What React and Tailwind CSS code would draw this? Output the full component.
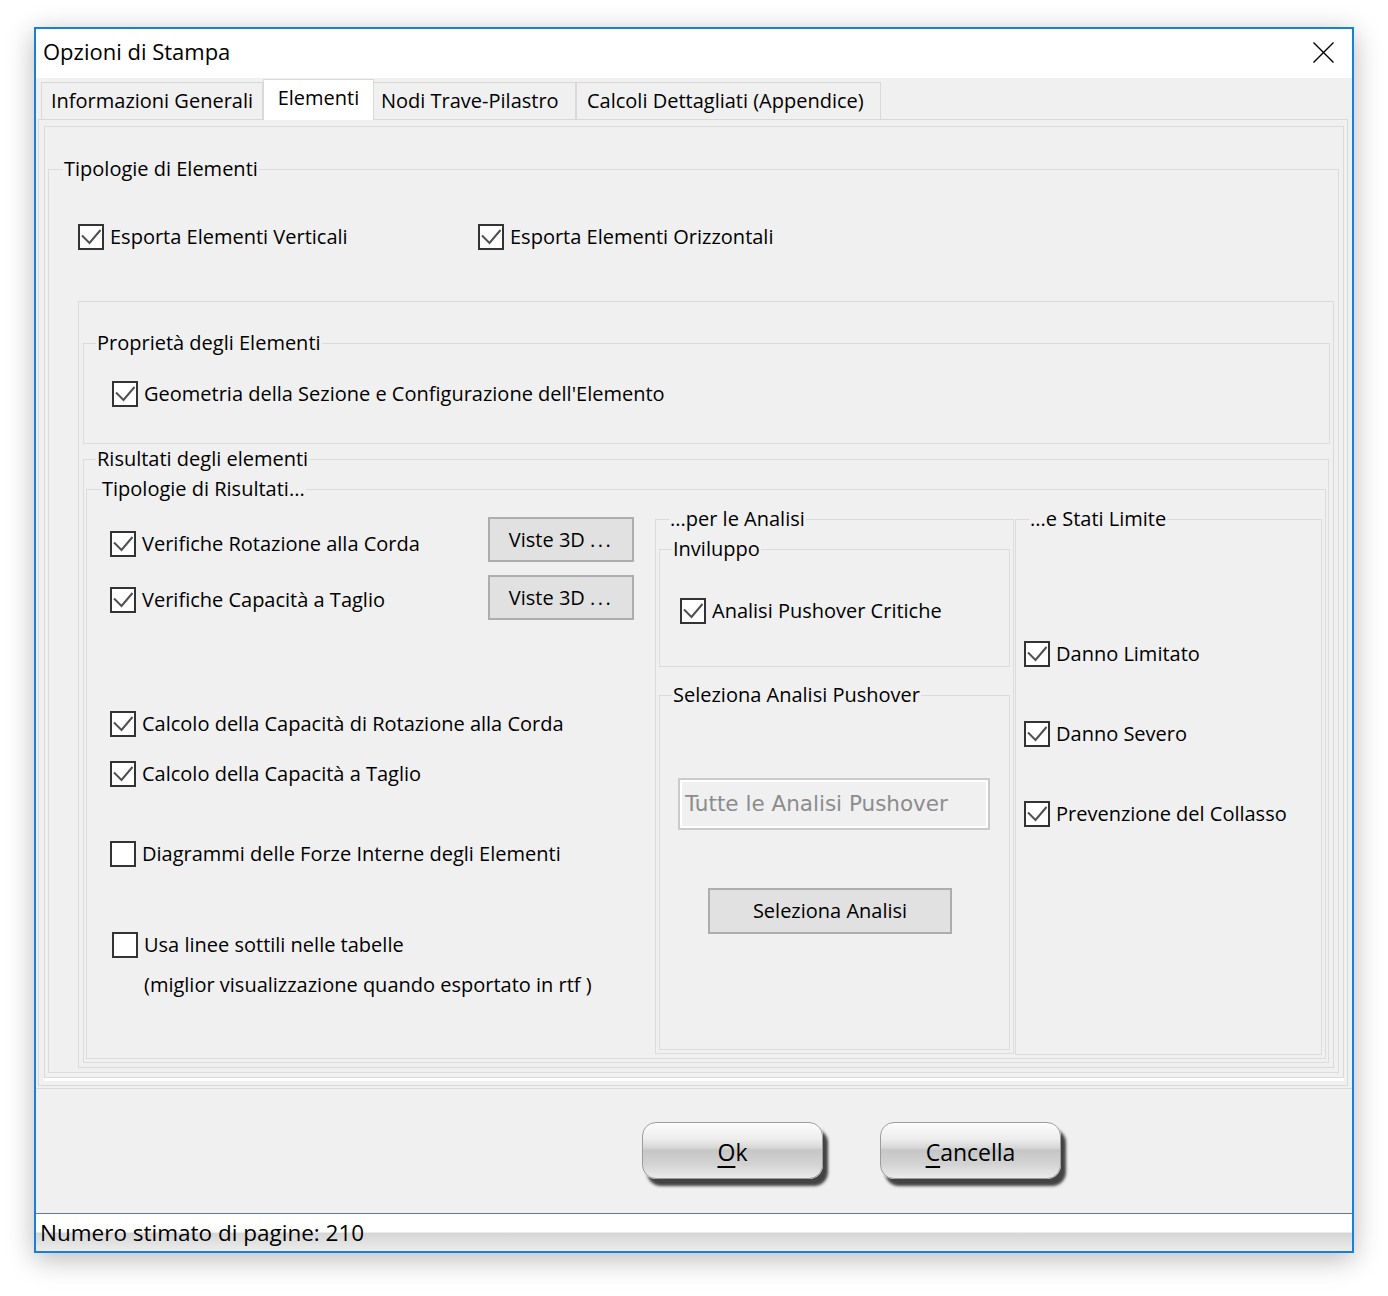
function Box({ checked }) {
  return (
    <span className="w-[26px] h-[26px] border-2 border-[#333] bg-white flex items-center justify-center shrink-0">
      {checked && (
        <svg width="22" height="22" viewBox="0 0 22 22">
          <path d="M2 9.5 L9.5 17 L20.5 4" fill="none" stroke="#505050" strokeWidth="2" />
        </svg>
      )}
    </span>
  )
}

function CheckRow({ checked, label, className = '' }) {
  return (
    <div className={'flex items-center h-[26px] ' + className}>
      <Box checked={checked} />
      <span className="ml-[6px] leading-[24px] whitespace-nowrap">{label}</span>
    </div>
  )
}

function Group({ title, className = '', lg = '', children }) {
  return (
    <fieldset className={'min-w-0 border border-[#dcdcdc] ' + className}>
      <legend className={'px-[1px] leading-[24px] whitespace-nowrap ' + lg}>{title}</legend>
      {children}
    </fieldset>
  )
}

function WinButton({ children, className = '' }) {
  return (
    <button className={'border-2 border-[#adadad] bg-[#e1e1e1] leading-[24px] flex items-center justify-center ' + className}>
      {children}
    </button>
  )
}

function GlossButton({ first, rest }) {
  return (
    <button className="w-[181px] h-[57px] rounded-[14px] border border-[#9c9c9c] bg-[linear-gradient(180deg,#fcfcfc_0%,#ececec_30%,#d9d9d9_44%,#c6c6c6_50%,#d3d3d3_75%,#ebebeb_100%)] shadow-[5px_7px_3px_rgba(0,0,0,0.72),inset_0_1px_0_#fff] text-[23px] leading-[30px] pt-[2px]">
      <span className="underline decoration-2 underline-offset-[5px]">{first}</span>
      {rest}
    </button>
  )
}

export default function App() {
  return (
    <div className="min-h-[1296px] bg-white pt-[27px] pl-[34px] font-['Open_Sans',sans-serif] text-[20px] text-black">
      <div className="w-[1320px] h-[1226px] border-2 border-[#1a7fd6] bg-[#f0f0f0] flex flex-col shadow-[0_6px_26px_rgba(0,0,0,0.28)]">
        {/* title bar */}
        <div className="h-[49px] bg-white flex justify-between shrink-0">
          <div className="pl-[7px] pt-[7px] text-[22px] leading-[30px]">Opzioni di Stampa</div>
          <svg className="mt-[13px] mr-[18px]" width="21" height="21" viewBox="0 0 21 21">
            <path d="M0.5 0.5 L20.5 20.5 M20.5 0.5 L0.5 20.5" stroke="#000" strokeWidth="1.4" />
          </svg>
        </div>

        {/* tabs */}
        <div className="h-[41px] flex items-end pl-[5px] shrink-0">
          <div className="w-[222px] h-[37px] border border-b-0 border-[#d9d9d9] text-center pt-[6px] leading-[24px]">Informazioni Generali</div>
          <div className="relative z-10 -mb-[1px] w-[111px] h-[41px] bg-white border border-b-0 border-[#d9d9d9] text-center pt-[6px] leading-[24px]">Elementi</div>
          <div className="w-[202px] h-[37px] border border-b-0 border-l-0 border-[#d9d9d9] pl-[7px] pt-[6px] leading-[24px] whitespace-nowrap">Nodi Trave-Pilastro</div>
          <div className="w-[305px] h-[37px] border border-b-0 border-[#d9d9d9] pl-[10px] pt-[6px] leading-[24px] whitespace-nowrap">Calcoli Dettagliati (Appendice)</div>
        </div>

        {/* tab page */}
        <div className="ml-[2px] w-[1310px] h-[967px] shrink-0 border border-[#d9d9d9] pt-[6px] pl-[5px]">
          <div className="w-[1300px] h-[952px] border border-[#dadada] pl-[3px] shadow-[0_3px_0_#ffffff]">
            <Group title="Tipologie di Elementi" className="mt-[30px] w-[1291px] h-[916px]" lg="ml-[14px]">
              <div className="mt-[43px] ml-[29px] flex">
                <CheckRow checked label="Esporta Elementi Verticali" className="w-[400px]" />
                <CheckRow checked label="Esporta Elementi Orizzontali" />
              </div>

              <div className="mt-[51px] ml-[29px] w-[1256px] h-[767px] border border-[#dadada] pl-[4px]">
                <Group title="Proprietà degli Elementi" className="mt-[29px] w-[1247px] h-[113px]" lg="ml-[12px]">
                  <CheckRow checked label="Geometria della Sezione e Configurazione dell'Elemento" className="mt-[26px] ml-[28px]" />
                </Group>

                <Group title="Risultati degli elementi" className="mt-[3px] w-[1246px] h-[616px]" lg="ml-[12px]">
                  <Group title="Tipologie di Risultati..." className="mt-[6px] ml-[2px] w-[1240px] h-[582px]" lg="ml-[14px]">
                    <div className="flex">
                      {/* left column */}
                      <div className="w-[568px] flex flex-col">
                        <div className="mt-[16px] pl-[23px] flex items-start">
                          <CheckRow checked label="Verifiche Rotazione alla Corda" className="w-[378px] mt-[14px]" />
                          <WinButton className="w-[146px] h-[45px]">
                            Viste 3D <span className="ml-[5px] tracking-[2.5px]">...</span>
                          </WinButton>
                        </div>
                        <div className="mt-[13px] pl-[23px] flex items-start">
                          <CheckRow checked label="Verifiche Capacità a Taglio" className="w-[378px] mt-[12px]" />
                          <WinButton className="w-[146px] h-[45px]">
                            Viste 3D <span className="ml-[5px] tracking-[2.5px]">...</span>
                          </WinButton>
                        </div>
                        <CheckRow checked label="Calcolo della Capacità di Rotazione alla Corda" className="mt-[91px] ml-[23px]" />
                        <CheckRow checked label="Calcolo della Capacità a Taglio" className="mt-[24px] ml-[23px]" />
                        <CheckRow label="Diagrammi delle Forze Interne degli Elementi" className="mt-[54px] ml-[23px]" />
                        <CheckRow label="Usa linee sottili nelle tabelle" className="mt-[65px] ml-[25px]" />
                        <div className="mt-[15px] ml-[57px] leading-[24px]">(miglior visualizzazione quando esportato in rtf )</div>
                      </div>

                      {/* middle column */}
                      <Group title="...per le Analisi" className="mt-[6px] w-[359px] h-[547px]" lg="ml-[13px]">
                        <Group title="Inviluppo" className="mt-[6px] ml-[3px] w-[351px] h-[130px]" lg="ml-[12px]">
                          <CheckRow checked label="Analisi Pushover Critiche" className="mt-[37px] ml-[20px]" />
                        </Group>
                        <Group title="Seleziona Analisi Pushover" className="mt-[16px] ml-[3px] w-[351px] h-[367px]" lg="ml-[12px]">
                          <div className="mt-[71px] ml-[18px] w-[312px] h-[52px] border-2 border-[#cacaca] shadow-[inset_0_0_0_2px_#ffffff] pl-[5px] flex items-center font-['DejaVu_Sans',sans-serif] text-[21.5px] text-[#8c8c8c] whitespace-nowrap">
                            Tutte le Analisi Pushover
                          </div>
                          <WinButton className="mt-[58px] ml-[48px] w-[244px] h-[46px]">Seleziona Analisi</WinButton>
                        </Group>
                      </Group>

                      {/* right column */}
                      <Group title="...e Stati Limite" className="mt-[6px] ml-[1px] w-[307px] h-[548px]" lg="ml-[13px]">
                        <CheckRow checked label="Danno Limitato" className="mt-[110px] ml-[8px]" />
                        <CheckRow checked label="Danno Severo" className="mt-[54px] ml-[8px]" />
                        <CheckRow checked label="Prevenzione del Collasso" className="mt-[54px] ml-[8px]" />
                      </Group>
                    </div>
                  </Group>
                </Group>
              </div>
            </Group>
          </div>
        </div>

        {/* buttons */}
        <div className="h-[127px] pt-[2px] shrink-0">
          <div className="h-full border-t border-[#dadada] pt-[33px] pl-[606px] flex gap-[57px]">
            <GlossButton first="O" rest="k" />
            <GlossButton first="C" rest="ancella" />
          </div>
        </div>

        {/* status bar */}
        <div className="flex-1 border-t border-[#62799a] bg-[linear-gradient(180deg,#ffffff_0%,#ffffff_48%,#d6d6d6_52%,#ececec_100%)] pl-[4px] pt-[4px] text-[22.5px] leading-[30px]">
          Numero stimato di pagine: 210
        </div>
      </div>
    </div>
  )
}
